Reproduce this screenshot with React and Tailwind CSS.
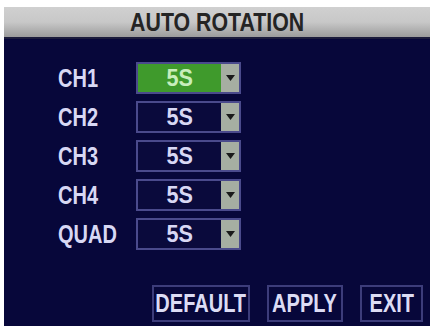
import React from "react";

const channels = [
  { name: "CH1", value: "5S", active: true },
  { name: "CH2", value: "5S" },
  { name: "CH3", value: "5S" },
  { name: "CH4", value: "5S" },
  { name: "QUAD", value: "5S" },
];

const osdFont = { fontFamily: '"Liberation Sans", Arial, sans-serif' };

function Select({ value, active }) {
  return (
    <div className="flex h-[32px] w-[105px] border-2 border-[#4a4a8c]">
      <div
        className={`flex flex-1 items-center justify-center text-[24px] font-bold leading-none ${
          active ? "bg-[#3f9a2c] text-[#c8eebc]" : "bg-[#0a0a3c] text-[#d8d8f4]"
        }`}
      >
        <span className="inline-block scale-x-[0.9]">{value}</span>
      </div>
      <div className="flex w-[18px] items-center justify-center bg-[#a6aea2]">
        <svg width="9" height="6" viewBox="0 0 9 6">
          <path d="M0 0 L9 0 L4.5 6 Z" fill="#1a1a1a" />
        </svg>
      </div>
    </div>
  );
}

function OsdButton({ label, width }) {
  return (
    <div
      className={`flex h-[37px] items-center justify-center border-2 border-[#3c3c7a] text-[25px] font-bold leading-none text-[#dcdcf4] ${width}`}
    >
      <span className="inline-block scale-x-[0.8]">{label}</span>
    </div>
  );
}

export default function App() {
  return (
    <div className="h-[326px] w-[432px] overflow-hidden bg-white pl-[4px] pt-[7px]" style={osdFont}>
      <div className="flex h-[319px] w-[426px] flex-col bg-[#07073a]">
        {/* title bar */}
        <div className="flex h-[32px] items-center justify-center border-b-2 border-[#1c1c3c] bg-gradient-to-b from-[#d0d0d0] via-[#c8c8c8] to-[#9c9c9c]">
          <span className="inline-block scale-x-[0.82] text-[26px] font-bold leading-none text-[#242424]">AUTO ROTATION</span>
        </div>

        {/* channel rows */}
        <div className="flex flex-col gap-[7px] pl-[54px] pt-[23px]">
          {channels.map((ch) => (
            <div key={ch.name} className="flex items-center">
              <div className="w-[78px] text-[25px] font-bold leading-none text-[#d8d8f4]">
                <span className="inline-block origin-left scale-x-[0.8]">{ch.name}</span>
              </div>
              <Select value={ch.value} active={ch.active} />
            </div>
          ))}
        </div>

        {/* buttons */}
        <div className="mt-auto flex justify-end gap-[17px] pb-[4px] pr-[7px]">
          <OsdButton label="DEFAULT" width="w-[98px]" />
          <OsdButton label="APPLY" width="w-[76px]" />
          <OsdButton label="EXIT" width="w-[63px]" />
        </div>
      </div>
    </div>
  );
}
